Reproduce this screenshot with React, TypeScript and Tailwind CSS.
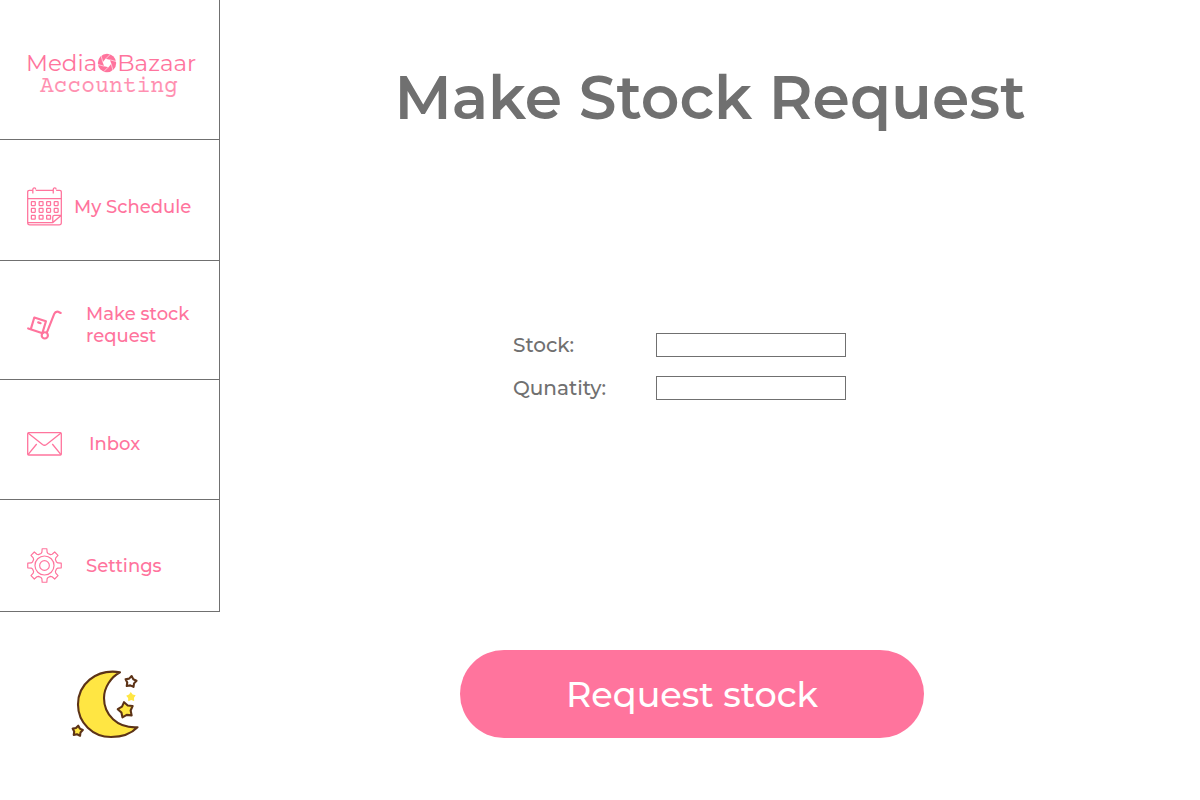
import type { ReactNode } from "react";

type Point = [number, number];

const polar = (cx: number, cy: number, r: number, deg: number): Point => {
  const a = (deg * Math.PI) / 180;
  return [cx + r * Math.cos(a), cy + r * Math.sin(a)];
};

const toPoints = (points: Point[]) =>
  points.map(([x, y]) => `${x.toFixed(2)},${y.toFixed(2)}`).join(" ");

const starPoints = (cx: number, cy: number, r: number, tilt: number) =>
  toPoints(
    Array.from({ length: 10 }, (_, i) =>
      polar(cx, cy, i % 2 === 0 ? r : r * 0.62, tilt - 90 + i * 36),
    ),
  );

const gearPoints = toPoints(
  Array.from({ length: 8 }, (_, i) => i * 45 - 90).flatMap((a): Point[] => [
    polar(18, 18, 12.8, a - 16),
    polar(18, 18, 14, a - 11),
    polar(18, 18, 17.4, a - 8),
    polar(18, 18, 17.4, a + 8),
    polar(18, 18, 14, a + 11),
    polar(18, 18, 12.8, a + 16),
  ]),
);

const blades = Array.from({ length: 6 }, (_, i) => i * 60 + 10);

function ApertureIcon() {
  return (
    <svg viewBox="0 0 20 20" className="mb-px size-5 shrink-0" aria-hidden="true">
      <circle cx="10" cy="10" r="9.2" fill="#ff749d" />
      <polygon points={toPoints(blades.map((a) => polar(10, 10, 4.4, a)))} fill="#fff" />
      {blades.map((a) => {
        const [x1, y1] = polar(10, 10, 4.2, a);
        const [x2, y2] = polar(10, 10, 9.8, a + 42);
        return <line key={a} x1={x1} y1={y1} x2={x2} y2={y2} stroke="#fff" strokeWidth="0.6" />;
      })}
    </svg>
  );
}

function CalendarIcon() {
  return (
    <svg viewBox="0 0 36 40" className="h-10 w-[35px] shrink-0" fill="none" stroke="#ff749d" strokeWidth="1.3" aria-hidden="true">
      <path d="M6 2.8H2.5Q.7 2.8.7 4.6V36.3Q.7 38.5 2.9 38.5H33Q35.3 38.5 35.3 36.3V4.6Q35.3 2.8 33.5 2.8H30M9 2.8H27M.7 11.3H35.3M.7 36H26.5L35.3 28.5M26.5 36V30.3Q26.5 28.5 28.3 28.5H35.3" />
      <path d="M6 6V2Q6 .4 7.5 .4T9 2M27 6V2Q27 .4 28.5 .4T30 2" />
      {[14.5, 21.5, 28.5].map((y) =>
        [4.5, 12.5, 20.2, 28].map((x) =>
          y > 28 && x > 27 ? null : <rect key={`${x}-${y}`} x={x} y={y} width="4" height="4" rx="0.5" />,
        ),
      )}
    </svg>
  );
}

function TrolleyIcon() {
  return (
    <svg viewBox="0 0 36 32" className="h-8 w-[35px] shrink-0" fill="none" stroke="#ff749d" strokeWidth="2.2" strokeLinejoin="round" strokeLinecap="round" aria-hidden="true">
      <path d="M1.2 19.5 16 24.5M20.5 23.5 28 4.5Q29.2 1.8 32 2.3L34.6 3.6" />
      <path d="M4 20 7.5 8.3 19.5 12.2 15.8 24.3M11.5 13.3 14 14.2" />
      <circle cx="18.3" cy="26.7" r="3.2" />
    </svg>
  );
}

function EnvelopeIcon() {
  return (
    <svg viewBox="0 0 35 24" className="h-6 w-[35px] shrink-0" fill="none" stroke="#ff749d" strokeWidth="1.3" aria-hidden="true">
      <rect x="0.7" y="0.7" width="33.6" height="22.3" rx="1" />
      <path d="M1 1 15.5 12.5Q17.5 14 19.5 12.5L34 1M1 22.7 9.7 12M34 22.7 25.3 12" />
    </svg>
  );
}

function GearIcon() {
  return (
    <svg viewBox="0 0 36 36" className="size-[35px] shrink-0" fill="none" stroke="#ff749d" strokeWidth="1.2" strokeLinejoin="round" aria-hidden="true">
      <polygon points={gearPoints} />
      <circle cx="18" cy="18" r="9.8" />
      <circle cx="18" cy="18" r="5" />
    </svg>
  );
}

function MoonIcon() {
  return (
    <svg viewBox="0 0 70 70" className="size-[70px]" stroke="#5c3317" strokeWidth="2.1" strokeLinejoin="round" aria-hidden="true">
      <path d="M49 2.2C24 -1.5 7 15 7 34.5C7 53 22 67 40 67C50.5 67 60.5 63.5 66.5 57.3C46 58.5 33 44.5 33 28C33 17.5 40 7 49 2.2Z" fill="#ffe643" />
      <polygon points={starPoints(59.8, 11.8, 5.8, 8)} fill="#fff" />
      <polygon points={starPoints(60, 27, 5, -3)} fill="#ffe643" stroke="none" />
      <polygon points={starPoints(54.7, 40, 8, -12)} fill="#ffe643" />
      <polygon points={starPoints(6.5, 61, 5.4, 8)} fill="#ffe643" />
    </svg>
  );
}

function NavItem({ icon, className, children }: { icon: ReactNode; className: string; children: ReactNode }) {
  return (
    <li className="border-b border-[#707070]">
      <a href="#" className={`flex items-center pl-[27px] text-lg/[22px] font-medium text-[#ff749d] ${className}`}>
        {icon}
        <span>{children}</span>
      </a>
    </li>
  );
}

function Field({ id, label }: { id: string; label: string }) {
  return (
    <div className="flex items-center">
      <label htmlFor={id} className="w-[143px] text-xl/6 font-medium">
        {label}
      </label>
      <input id={id} type="text" className="h-6 w-[190px] border border-[#707070] bg-white px-1 text-sm outline-none" />
    </div>
  );
}

export default function App() {
  return (
    <div className="flex min-h-screen bg-white font-[Montserrat,Inter,sans-serif] text-[#707070]">
      <aside className="w-[220px] shrink-0">
        <div className="border-r border-[#707070]">
          <div className="h-[140px] border-b border-[#707070] pt-[51px] pl-[26px] text-[#ff749d]">
            <div className="flex items-center text-[23px]/6">
              <span>Media</span>
              <ApertureIcon />
              <span>Bazaar</span>
            </div>
            <div className="pl-[14px] font-['Courier_Prime','Liberation_Mono',monospace] text-[23px]/6 text-[#ff749d]/80">
              Accounting
            </div>
          </div>
          <nav>
            <ul>
              <NavItem icon={<CalendarIcon />} className="h-[120px] gap-3 pt-[14px]">My Schedule</NavItem>
              <NavItem icon={<TrolleyIcon />} className="h-[118px] gap-6 pt-2.5">
                Make stock
                <br />
                request
              </NavItem>
              <NavItem icon={<EnvelopeIcon />} className="h-[119px] gap-[27px] pt-2">Inbox</NavItem>
              <NavItem icon={<GearIcon />} className="h-[111px] gap-6 pt-5">Settings</NavItem>
            </ul>
          </nav>
        </div>
        <button type="button" aria-label="Night mode" className="mt-[58px] ml-[71px] block">
          <MoonIcon />
        </button>
      </aside>
      <main className="flex flex-1 flex-col items-center pt-[58px]">
        <h1 className="text-[60px]/[80px] font-semibold">Make Stock Request</h1>
        <form className="flex w-full flex-col items-center pt-[195px] pr-9" onSubmit={(e) => e.preventDefault()}>
          <div className="flex flex-col gap-[19px] pr-[25px]">
            <Field id="stock" label="Stock:" />
            <Field id="quantity" label="Qunatity:" />
          </div>
          <button type="submit" className="mt-[250px] h-[88px] w-[464px] rounded-full bg-[#ff749d] pt-px text-[35px]/[48px] font-medium text-white">
            Request stock
          </button>
        </form>
      </main>
    </div>
  );
}
